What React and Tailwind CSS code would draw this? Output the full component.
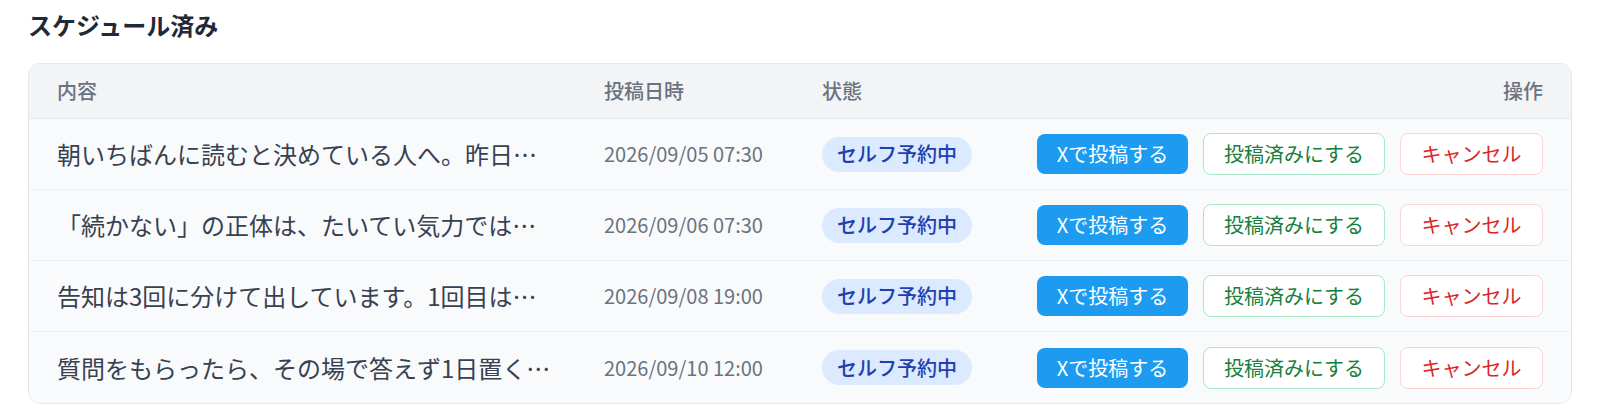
import React from "react";

const rows = [
  { text: "朝いちばんに読むと決めている人へ。昨日…", date: "2026/09/05 07:30" },
  { text: "「続かない」の正体は、たいてい気力では…", date: "2026/09/06 07:30" },
  { text: "告知は3回に分けて出しています。1回目は…", date: "2026/09/08 19:00" },
  { text: "質問をもらったら、その場で答えず1日置く…", date: "2026/09/10 12:00" },
];

export default function App() {
  return (
    <div
      className="bg-white w-[1600px] h-[418px] px-7 pt-[8px]"
      style={{ fontFamily: '"Noto Sans CJK JP", "Noto Sans", sans-serif' }}
    >
      <h2 className="text-[24px] leading-[34px] font-bold text-[#1f2937]">スケジュール済み</h2>
      <div className="mt-[21px] border border-[#e5e7eb] rounded-xl overflow-hidden">
        <div className="grid grid-cols-[547px_218px_1fr_auto] items-center h-[55px] px-7 bg-[#f3f4f6] border-b border-[#e5e7eb] text-[20px] font-medium text-[#6b7280]">
          <div>内容</div>
          <div>投稿日時</div>
          <div>状態</div>
          <div className="text-right">操作</div>
        </div>
        {rows.map((r, i) => (
          <div
            key={i}
            className={`grid grid-cols-[547px_218px_1fr_auto] items-center h-[71px] px-7 bg-[#f9fafb] ${
              i < rows.length - 1 ? "border-b border-[#eef0f3]" : ""
            }`}
          >
            <div className="text-[24px] text-[#374151] whitespace-nowrap overflow-hidden">{r.text}</div>
            <div className="text-[20px] text-[#6b7280]">{r.date}</div>
            <div>
              <span className="inline-flex items-center h-[35px] px-[15px] rounded-full bg-[#dbeafe] text-[#1e40af] text-[20px] font-medium">
                セルフ予約中
              </span>
            </div>
            <div className="flex items-center gap-[15px]">
              <button className="h-[40px] w-[151px] rounded-lg bg-[#1d9bf0] text-white text-[20px]">
                Xで投稿する
              </button>
              <button className="h-[42px] w-[182px] rounded-lg bg-white border border-[#a7e8c8] text-[#15803d] text-[20px]">
                投稿済みにする
              </button>
              <button className="h-[42px] w-[143px] rounded-lg bg-white border border-[#fcd5d5] text-[#dc2626] text-[20px]">
                キャンセル
              </button>
            </div>
          </div>
        ))}
      </div>
    </div>
  );
}
